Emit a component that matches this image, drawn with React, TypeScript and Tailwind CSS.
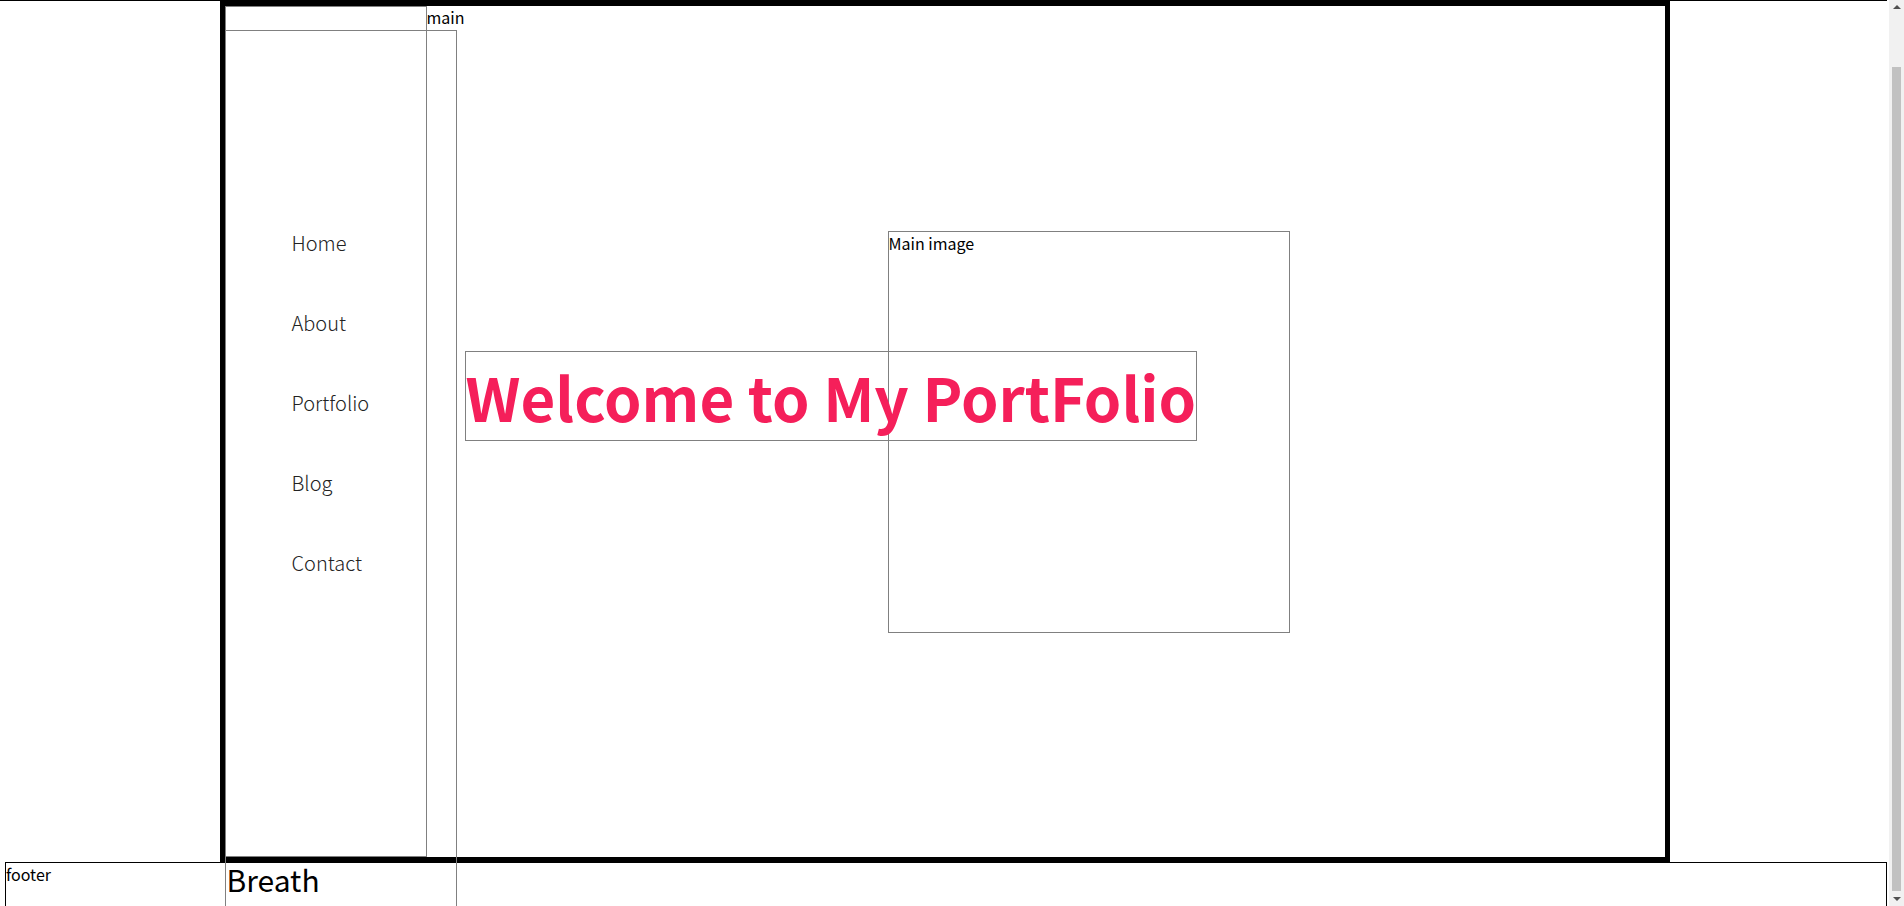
const navItems = ["Home", "About", "Portfolio", "Blog", "Contact"];

const font = { fontFamily: "'Noto Sans CJK KR', 'Noto Sans', sans-serif" };

export default function App() {
  return (
    <div className="w-[1889px] bg-white text-black" style={font}>
      <div className="mr-[2px] h-px bg-black" />

      <div className="mx-auto flex h-[861px] w-[1450px] border-[5px] border-black">
        <div className="flex w-[232px] shrink-0 flex-col">
          <div className="flex h-[24px] items-start">
            <div className="h-[24px] w-[202px] shrink-0 border-x border-t border-[#808080]" />
            <span className="text-base leading-[23px] whitespace-nowrap">main</span>
          </div>

          <div className="flex h-[975px] w-[232px] shrink-0 flex-col items-start border border-[#808080]">
            <nav className="h-[826px] w-[201px] shrink-0 border-r border-b border-[#808080] pt-[172px] pl-[66px]">
              <ul>
                {navItems.map((item) => (
                  <li key={item} className="text-[20px] leading-[80px] font-light text-[#222]">
                    {item}
                  </li>
                ))}
              </ul>
            </nav>
            <p className="pl-px text-[30px] leading-normal">Breath</p>
          </div>
        </div>

        <section className="relative flex flex-1 items-center">
          <div className="ml-[431px] h-[402px] w-[402px] border border-[#808080] text-base leading-[23px]">
            Main image
          </div>
          <h1 className="absolute top-[345px] left-[8px] border border-[#808080] text-[60px] leading-[88px] font-bold whitespace-nowrap text-[#f51f5a]">
            Welcome to My PortFolio
          </h1>
        </section>
      </div>

      <footer className="mr-[2px] ml-[5px] h-[120px] border border-black text-base leading-[23px]">
        footer
      </footer>

      <div className="fixed top-0 right-0 flex h-screen w-[15px] flex-col items-center bg-[#f1f1f1]">
        <div className="mt-[5px] h-0 w-0 border-x-[4px] border-b-[4px] border-x-transparent border-b-[#505050]" />
        <div className="mt-[58px] w-[9px] flex-1 bg-[#c1c1c1]" />
        <div className="mt-[6px] mb-[5px] h-0 w-0 border-x-[4px] border-t-[4px] border-x-transparent border-t-[#505050]" />
      </div>
    </div>
  );
}
